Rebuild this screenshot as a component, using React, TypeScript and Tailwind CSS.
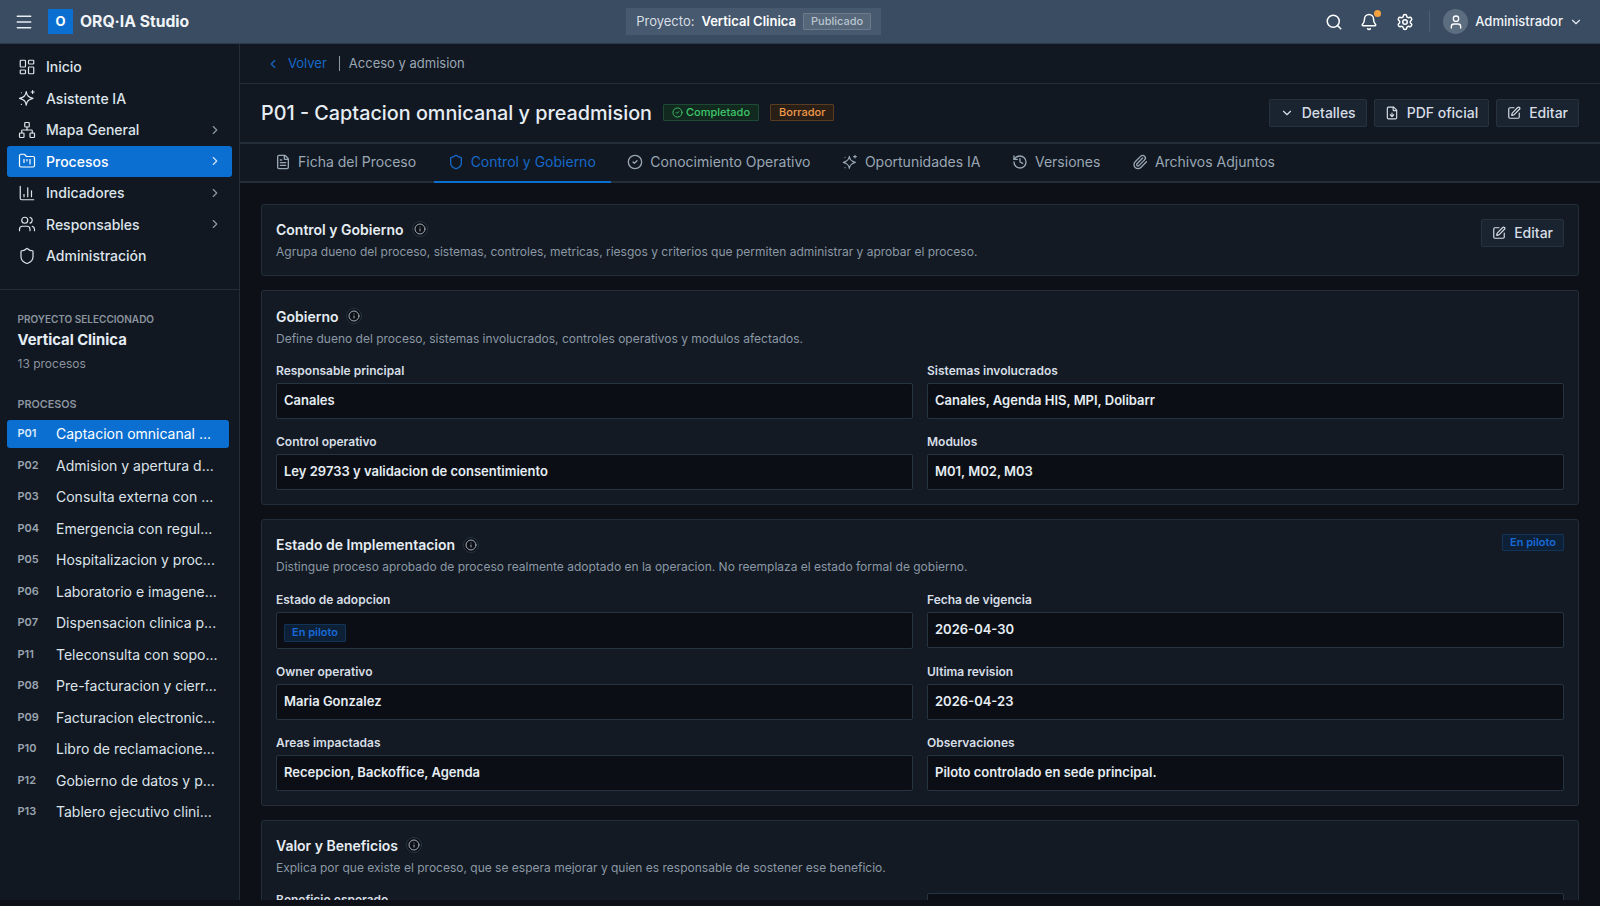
import {
  Bell,
  ChevronDown,
  ChevronLeft,
  ChevronRight,
  CircleCheck,
  FileDown,
  FileText,
  FolderKanban,
  ChartColumn,
  History,
  Info,
  LayoutDashboard,
  Menu,
  Network,
  Paperclip,
  Search,
  Settings,
  Shield,
  SquarePen,
  User,
  Users,
} from 'lucide-react'

function StarIcon({ size = 18, strokeWidth = 1.7 }: { size?: number; strokeWidth?: number }) {
  return (
    <svg
      width={size}
      height={size}
      viewBox="0 0 24 24"
      fill="none"
      stroke="currentColor"
      strokeWidth={strokeWidth}
      strokeLinecap="round"
      strokeLinejoin="round"
    >
      <path d="M11 3.500c.8 5.200 2.600 7.200 9 9-6.400 1.800-8.200 3.800-9 9-.8-5.200-2.600-7.200-9-9 6.400-1.800 8.200-3.800 9-9Z" />
      <path d="M19.500 2v4M17.500 4h4" />
      <path d="M4.500 20.500h.01M4.500 5h.01" />
    </svg>
  )
}

const navItems = [
  { label: 'Inicio', icon: LayoutDashboard },
  { label: 'Asistente IA', icon: StarIcon },
  { label: 'Mapa General', icon: Network, arrow: true },
  { label: 'Procesos', icon: FolderKanban, arrow: true, active: true },
  { label: 'Indicadores', icon: ChartColumn, arrow: true },
  { label: 'Responsables', icon: Users, arrow: true },
  { label: 'Administración', icon: Shield },
]

const processes = [
  ['P01', 'Captacion omnicanal ...'],
  ['P02', 'Admision y apertura d...'],
  ['P03', 'Consulta externa con ...'],
  ['P04', 'Emergencia con regul...'],
  ['P05', 'Hospitalizacion y proc...'],
  ['P06', 'Laboratorio e imagene...'],
  ['P07', 'Dispensacion clinica p...'],
  ['P11', 'Teleconsulta con sopo...'],
  ['P08', 'Pre-facturacion y cierr...'],
  ['P09', 'Facturacion electronic...'],
  ['P10', 'Libro de reclamacione...'],
  ['P12', 'Gobierno de datos y p...'],
  ['P13', 'Tablero ejecutivo clini...'],
]

const tabs = [
  { label: 'Ficha del Proceso', icon: FileText },
  { label: 'Control y Gobierno', icon: Shield, active: true },
  { label: 'Conocimiento Operativo', icon: CircleCheck },
  { label: 'Oportunidades IA', icon: StarIcon },
  { label: 'Versiones', icon: History },
  { label: 'Archivos Adjuntos', icon: Paperclip },
]

function CardTitle({ title, text }: { title: string; text: string }) {
  return (
    <div>
      <div className="flex h-[22px] items-center gap-[8px]">
        <h3 className="text-[14px] font-semibold text-[#e6edf3]">{title}</h3>
        <span className="flex h-[16px] w-[16px] items-center justify-center rounded-full border border-[#263442] bg-[#0d1117]">
          <Info size={12} className="text-[#a3afbb]" />
        </span>
      </div>
      <p className="mt-[2.500px] text-[12px] leading-[18px] text-[#8b98a5]">{text}</p>
    </div>
  )
}

function Field({ label, value }: { label: string; value: string }) {
  return (
    <div>
      <div className="flex h-[18px] items-center text-[12px] font-semibold text-[#d7dee6]">{label}</div>
      <div className="mt-[3px] flex h-[36px] items-center rounded-[2px] border border-[#263442] bg-[#0b0f15] px-[7px] text-[13px] font-semibold text-[#e6edf3]">
        {value}
      </div>
    </div>
  )
}

function ActionButton({ icon: Icon, label }: { icon: typeof SquarePen; label: string }) {
  return (
    <button className="flex h-[28px] items-center gap-[8px] rounded-[2px] border border-[#26333f] bg-[#1a2430] px-[10px] pb-[1px] text-[14px] font-medium text-[#d7dee6]">
      <Icon size={14} />
      {label}
    </button>
  )
}

function Sidebar() {
  return (
    <aside className="flex w-[240px] shrink-0 flex-col border-r border-[#232e3a] bg-[#111822]">
      <nav className="flex flex-col px-[7px] pt-[7px]">
        {navItems.map((item) => (
          <div
            key={item.label}
            className={`flex h-[31.5px] items-center rounded-[3px] pl-[11px] pr-[10px] text-[14px] font-medium ${
              item.active ? 'bg-[#0b6fd1] text-white' : 'text-[#dde4ea]'
            }`}
          >
            <item.icon size={18} strokeWidth={1.6} />
            <span className="ml-[10px] flex-1">{item.label}</span>
            {item.arrow && <ChevronRight size={14} className={item.active ? 'text-[#cfe3f6]' : 'text-[#8b98a5]'} />}
          </div>
        ))}
      </nav>

      <div className="mt-[17px] border-t border-[#232e3a] px-[17.500px] pt-[22px]">
        <p className="text-[10px] leading-[14px] font-semibold text-[#8b949e]">PROYECTO SELECCIONADO</p>
        <p className="mt-[2px] text-[14.800px] leading-[24px] font-bold text-[#e6edf3]">Vertical Clinica</p>
        <p className="mt-[2px] text-[12px] leading-[20px] text-[#8b949e]">13 procesos</p>
        <p className="mt-[24px] text-[10.800px] leading-[14px] font-semibold text-[#8b949e]">PROCESOS</p>
      </div>

      <div className="mt-[8px] flex flex-col gap-[3.500px] px-[7px]">
        {processes.map(([code, name], i) => (
          <div
            key={code}
            className={`flex h-[28px] w-[222px] items-center rounded-[3px] pl-[10.500px] text-[14px] ${
              i === 0 ? 'bg-[#0b6fd1] text-white' : 'text-[#dde4ea]'
            }`}
          >
            <span className={`w-[38.500px] text-[11px] font-semibold ${i === 0 ? 'text-[#dcebfa]' : 'text-[#9aa5b1]'}`}>{code}</span>
            <span>{name}</span>
          </div>
        ))}
      </div>
    </aside>
  )
}

export default function App() {
  return (
    <div className="h-[906px] w-[1600px] overflow-hidden bg-[#0d1117] font-['Inter',sans-serif]">
      <div className="flex h-[900px] flex-col">
        <header className="flex h-[44px] shrink-0 items-center justify-between border-b border-[#2c3b4c] bg-[#394c62] pl-[14px] pr-[17px]">
          <div className="flex items-center">
            <Menu size={20} strokeWidth={1.8} className="text-[#e6edf3]" />
            <div className="ml-[14px] flex h-[25px] w-[25px] items-center justify-center bg-[#0b6fd1] text-[13px] font-bold text-white">O</div>
            <span className="ml-[7px] text-[15.700px] font-bold text-[#f0f4f8]">ORQ·IA Studio</span>
          </div>

          <div className="-ml-[7px] flex h-[27px] w-[255px] items-center bg-[#47596e] pl-[10px] text-[13px] text-[#d7dee6]">
            Proyecto:
            <span className="ml-[7px] font-semibold text-white">Vertical Clinica</span>
            <span className="ml-[7px] flex h-[17px] items-center rounded-[1px] border border-[#6b7b8d] bg-[#566779] px-[7px] text-[11px] font-medium text-[#b9c4cf]">
              Publicado
            </span>
          </div>

          <div className="flex items-center">
            <Search size={18} className="text-white" />
            <span className="relative ml-[17px]">
              <Bell size={18} className="text-white" />
              <span className="absolute right-[-3px] top-[-3px] h-[7px] w-[7px] rounded-full bg-[#f4a23f]" />
            </span>
            <Settings size={18} className="ml-[18px] text-white" />
            <span className="ml-[15px] h-[21px] w-px bg-[#4c5e73]" />
            <span className="ml-[13px] flex h-[25px] w-[25px] items-center justify-center rounded-full bg-[#5d6d80]">
              <User size={16} className="text-white" />
            </span>
            <span className="ml-[7px] text-[13px] font-medium text-[#f0f4f8]">Administrador</span>
            <ChevronDown size={14} className="ml-[6px] text-[#e6edf3]" />
          </div>
        </header>

        <div className="flex min-h-0 flex-1">
          <Sidebar />

          <main className="flex min-w-0 flex-1 flex-col overflow-hidden">
            <div className="flex h-[40px] shrink-0 items-center border-b border-[#232e3a] bg-[#111822] pl-[26px] text-[13px]">
              <ChevronLeft size={14} className="text-[#1769c9]" />
              <span className="ml-[8px] text-[#1769c9]">Volver</span>
              <span className="ml-[12px] h-[15px] w-px bg-[#8b98a5]" />
              <span className="ml-[9px] text-[#9aa7b4]">Acceso y admision</span>
            </div>

            <div className="flex h-[60px] shrink-0 items-center justify-between border-b-2 border-[#232e3a] bg-[#111822] px-[21px]">
              <div className="flex items-center">
                <h1 className="pt-[2px] text-[19.800px] font-medium text-[#e6edf3]">P01 - Captacion omnicanal y preadmision</h1>
                <span className="mb-[1px] ml-[11px] flex h-[17px] items-center gap-[3px] rounded-[1px] border border-[#1c4a34] bg-[#12291f] px-[8px] text-[11px] font-medium text-[#3fc66a]">
                  <CircleCheck size={11} />
                  Completado
                </span>
                <span className="mb-[1px] ml-[11px] flex h-[17px] items-center rounded-[1px] border border-[#5a3d20] bg-[#2a1f17] px-[8px] text-[11px] font-medium text-[#f0994a]">
                  Borrador
                </span>
              </div>
              <div className="flex gap-[7px]">
                <ActionButton icon={ChevronDown} label="Detalles" />
                <ActionButton icon={FileDown} label="PDF oficial" />
                <ActionButton icon={SquarePen} label="Editar" />
              </div>
            </div>

            <div className="flex h-[39px] shrink-0 gap-[2.500px] border-b-2 border-[#232e3a] bg-[#111822] pl-[21px]">
              {tabs.map((tab) => (
                <div
                  key={tab.label}
                  className={`-mb-[2px] flex items-center gap-[7px] border-b-2 pb-[2px] pl-[14px] pr-[15px] text-[14px] ${
                    tab.active ? 'border-[#0b6fd1] text-[#1769c9]' : 'border-transparent text-[#9aa7b4]'
                  }`}
                >
                  <tab.icon size={16} />
                  {tab.label}
                </div>
              ))}
            </div>

            <div className="flex flex-col gap-[14px] px-[21px] pt-[21px]">
              <section className="flex h-[72px] shrink-0 items-start justify-between rounded-[3px] border border-[#232e3a] bg-[#131a23] px-[14px] pt-[13px]">
                <CardTitle
                  title="Control y Gobierno"
                  text="Agrupa dueno del proceso, sistemas, controles, metricas, riesgos y criterios que permiten administrar y aprobar el proceso."
                />
                <div className="mt-[1px]">
                  <ActionButton icon={SquarePen} label="Editar" />
                </div>
              </section>

              <section className="shrink-0 rounded-[3px] border border-[#232e3a] bg-[#131a23] px-[14px] py-[14px]">
                <CardTitle
                  title="Gobierno"
                  text="Define dueno del proceso, sistemas involucrados, controles operativos y modulos afectados."
                />
                <div className="mt-[14px] grid grid-cols-2 gap-x-[14px] gap-y-[14px]">
                  <Field label="Responsable principal" value="Canales" />
                  <Field label="Sistemas involucrados" value="Canales, Agenda HIS, MPI, Dolibarr" />
                  <Field label="Control operativo" value="Ley 29733 y validacion de consentimiento" />
                  <Field label="Modulos" value="M01, M02, M03" />
                </div>
              </section>

              <section className="shrink-0 rounded-[3px] border border-[#232e3a] bg-[#131a23] px-[14px] py-[14px]">
                <div className="flex items-start justify-between">
                  <CardTitle
                    title="Estado de Implementacion"
                    text="Distingue proceso aprobado de proceso realmente adoptado en la operacion. No reemplaza el estado formal de gobierno."
                  />
                  <span className="flex h-[17px] items-center rounded-[1px] border border-[#113458] bg-[#0e2036] px-[7px] text-[11px] font-semibold text-[#1869d6]">
                    En piloto
                  </span>
                </div>
                <div className="mt-[15px] grid grid-cols-2 gap-x-[14px] gap-y-[14px]">
                  <div>
                    <div className="flex h-[18px] items-center text-[12px] font-semibold text-[#d7dee6]">Estado de adopcion</div>
                    <div className="mt-[3px] flex h-[37px] items-center rounded-[2px] border border-[#263442] bg-[#0b0f15] px-[7px] pt-[4px]">
                      <span className="flex h-[18px] items-center rounded-[1px] border border-[#113458] bg-[#0e2036] px-[7px] text-[11px] font-semibold text-[#1869d6]">
                        En piloto
                      </span>
                    </div>
                  </div>
                  <Field label="Fecha de vigencia" value="2026-04-30" />
                  <Field label="Owner operativo" value="Maria Gonzalez" />
                  <Field label="Ultima revision" value="2026-04-23" />
                  <Field label="Areas impactadas" value="Recepcion, Backoffice, Agenda" />
                  <Field label="Observaciones" value="Piloto controlado en sede principal." />
                </div>
              </section>

              <section className="shrink-0 rounded-[3px] border border-[#232e3a] bg-[#131a23] px-[14px] pb-[14px] pt-[13px]">
                <CardTitle
                  title="Valor y Beneficios"
                  text="Explica por que existe el proceso, que se espera mejorar y quien es responsable de sostener ese beneficio."
                />
                <div className="mt-[14px] grid grid-cols-2 gap-x-[14px] gap-y-[14px]">
                  <Field label="Beneficio esperado" value="" />
                  <div className="mt-[2px] h-[36px] rounded-[2px] border border-[#263442] bg-[#0b0f15]" />
                </div>
              </section>
            </div>
          </main>
        </div>
      </div>
    </div>
  )
}
